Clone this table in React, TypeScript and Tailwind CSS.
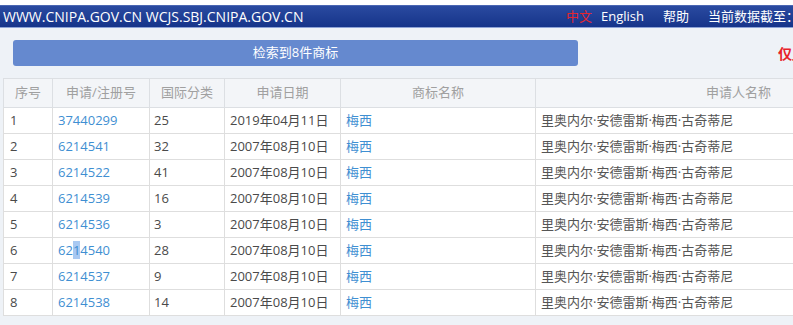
import React from "react";

const rows = [
  ["1", "37440299", "25", "2019年04月11日"],
  ["2", "6214541", "32", "2007年08月10日"],
  ["3", "6214522", "41", "2007年08月10日"],
  ["4", "6214539", "16", "2007年08月10日"],
  ["5", "6214536", "3", "2007年08月10日"],
  ["6", "6214540", "28", "2007年08月10日"],
  ["7", "6214537", "9", "2007年08月10日"],
  ["8", "6214538", "14", "2007年08月10日"],
];

const font = { fontFamily: '"Open Sans", "Noto Sans CJK SC", sans-serif' };

export default function App() {
  return (
    <div
      className="w-[793px] h-[325px] overflow-hidden bg-[#eef2f7] flex flex-col"
      style={font}
    >
      <div className="h-[5px] bg-white shrink-0" />
      <div className="h-[23px] shrink-0 bg-gradient-to-b from-[#2a4aa0] to-[#16348a] border-t border-[#4a66b2] border-b border-b-[#8ea3d6] flex items-center text-white text-[13px] whitespace-nowrap overflow-hidden">
        <div className="w-[566px] shrink-0 pl-[3px] text-[14px]">
          WWW.CNIPA.GOV.CN WCJS.SBJ.CNIPA.GOV.CN
        </div>
        <span className="text-[#e3262f]">中文</span>
        <span className="ml-[9px]">English</span>
        <span className="ml-[19px]">帮助</span>
        <span className="ml-[19px]">当前数据截至：</span>
      </div>
      <div className="flex items-center mt-[12px] h-[26px] shrink-0 whitespace-nowrap overflow-hidden">
        <div className="ml-[13px] w-[565px] h-[26px] shrink-0 rounded-[3px] bg-[#6589cf] flex items-center justify-center text-white text-[13px]">
          检索到8件商标
        </div>
        <div className="ml-[200px] text-[#e8222a] text-[14px] font-bold">仅显示</div>
      </div>
      <div className="mt-[12px] ml-[3px] overflow-hidden">
        <table className="table-fixed border-collapse w-[1100px] text-[13px]">
          <colgroup>
            <col className="w-[49px]" />
            <col className="w-[97px]" />
            <col className="w-[75px]" />
            <col className="w-[116px]" />
            <col className="w-[195px]" />
            <col className="w-[406px]" />
            <col />
          </colgroup>
          <thead>
            <tr className="h-[29px] text-[#a0a0a0] text-[13px]">
              {["序号", "申请/注册号", "国际分类", "申请日期", "商标名称", "申请人名称", ""].map((h, i) => (
                <th
                  key={i}
                  className="font-normal text-center border border-[#dcdfe3] bg-[#f3f5f8]"
                >
                  {h}
                </th>
              ))}
            </tr>
          </thead>
          <tbody>
            {rows.map((r) => (
              <tr key={r[0]} className="h-[26px] bg-white text-[#4a4a4a]">
                <td className="pl-[6px] border border-[#dedede]">{r[0]}</td>
                <td className="pl-[5px] border border-[#dedede] text-[#3f8fd2]">
                  {r[1] === "6214540" ? (
                    <>
                      62<span className="bg-[#a9c9f2]">1</span>4540
                    </>
                  ) : (
                    r[1]
                  )}
                </td>
                <td className="pl-[4px] border border-[#dedede]">{r[2]}</td>
                <td className="pl-[5px] border border-[#dedede]">{r[3]}</td>
                <td className="pl-[5px] border border-[#dedede] text-[#3f8fd2]">梅西</td>
                <td className="pl-[5px] border border-[#dedede] whitespace-nowrap text-[#555]">
                  里奥内尔·安德雷斯·梅西·古奇蒂尼
                </td>
                <td className="border border-[#dedede]" />
              </tr>
            ))}
          </tbody>
        </table>
      </div>
    </div>
  );
}
